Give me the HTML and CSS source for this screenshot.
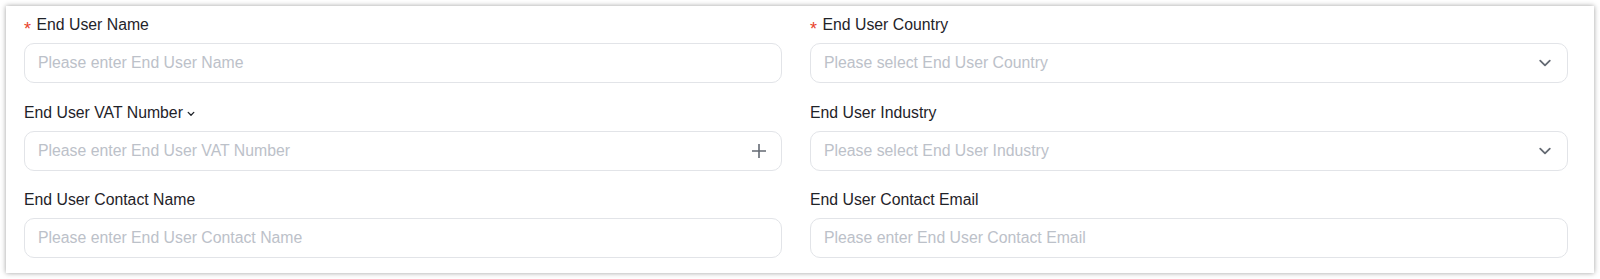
FILE: index.html
```html
<!DOCTYPE html>
<html lang="en">
<head>
<meta charset="utf-8">
<title>End User Form</title>
<link rel="stylesheet" href="styles.css">
</head>
<body>
<div class="card">
  <form class="grid">
    <div class="item">
      <label class="label"><span class="req">*</span>End User Name</label>
      <div class="box"><input class="control" type="text" placeholder="Please enter End User Name"></div>
    </div>
    <div class="item">
      <label class="label"><span class="req">*</span>End User Country</label>
      <div class="box select"><span class="ph">Please select End User Country</span>
        <svg class="icon" viewBox="0 0 16 16" width="16" height="16"><path d="M3.2 5.6 L8 10.4 L12.8 5.6" fill="none" stroke="#646a73" stroke-width="1.8" stroke-linecap="round" stroke-linejoin="round"/></svg>
      </div>
    </div>
    <div class="item">
      <label class="label">End User VAT Number<svg class="label-caret" viewBox="0 0 8 8" width="8" height="8"><path d="M1.2 2.4 L4 5.2 L6.8 2.4" fill="none" stroke="#1f2329" stroke-width="1.3" stroke-linecap="round" stroke-linejoin="round"/></svg></label>
      <div class="box"><input class="control" type="text" placeholder="Please enter End User VAT Number">
        <svg class="icon" viewBox="0 0 16 16" width="16" height="16"><path d="M8 1 V15 M1 8 H15" fill="none" stroke="#646a73" stroke-width="1.6"/></svg>
      </div>
    </div>
    <div class="item">
      <label class="label">End User Industry</label>
      <div class="box select"><span class="ph">Please select End User Industry</span>
        <svg class="icon" viewBox="0 0 16 16" width="16" height="16"><path d="M3.2 5.6 L8 10.4 L12.8 5.6" fill="none" stroke="#646a73" stroke-width="1.8" stroke-linecap="round" stroke-linejoin="round"/></svg>
      </div>
    </div>
    <div class="item">
      <label class="label">End User Contact Name</label>
      <div class="box"><input class="control" type="text" placeholder="Please enter End User Contact Name"></div>
    </div>
    <div class="item">
      <label class="label">End User Contact Email</label>
      <div class="box"><input class="control" type="text" placeholder="Please enter End User Contact Email"></div>
    </div>
  </form>
</div>
</body>
</html>
```
FILE: styles.css
```css
* { box-sizing: border-box; }

html, body {
  margin: 0;
  padding: 0;
  background: #ffffff;
}

body {
  font-family: "Liberation Sans", Arial, sans-serif;
  font-size: 15.8px;
  color: #1f2329;
}

.card {
  margin: 6px;
  padding: 8px 26px 15px 18px;
  background: #ffffff;
  box-shadow: 0 0 5px rgba(0, 0, 0, 0.38);
}

.grid {
  margin: 0;
  display: grid;
  grid-template-columns: 1fr 1fr;
  column-gap: 28px;
  row-gap: 18.5px;
}

.item {
  display: flex;
  flex-direction: column;
  gap: 7px;
}

.label {
  display: block;
  height: 22px;
  line-height: 22px;
  font-size: 15.8px;
  color: #1f2329;
  white-space: nowrap;
}

.req {
  color: #e8432b;
  font-size: 18px;
  line-height: 0;
  vertical-align: -4.5px;
  margin-right: 5.5px;
}

.label-caret {
  display: inline-block;
  vertical-align: baseline;
  margin-left: 4px;
}

.box {
  display: flex;
  align-items: center;
  height: 40px;
  border: 1px solid #e2e4e8;
  border-radius: 10px;
  padding: 0 14px 0 13px;
  background: #ffffff;
}

.control {
  flex: 1;
  min-width: 0;
  border: none;
  outline: none;
  padding: 0;
  margin: 0;
  height: 100%;
  background: transparent;
  font-family: inherit;
  font-size: 15.8px;
  color: #1f2329;
}

.control::placeholder {
  color: #bcc1c9;
  opacity: 1;
}

.ph {
  flex: 1;
  color: #bcc1c9;
  white-space: nowrap;
}

.icon {
  flex: none;
  display: block;
  width: 16px;
  height: 16px;
}
```
